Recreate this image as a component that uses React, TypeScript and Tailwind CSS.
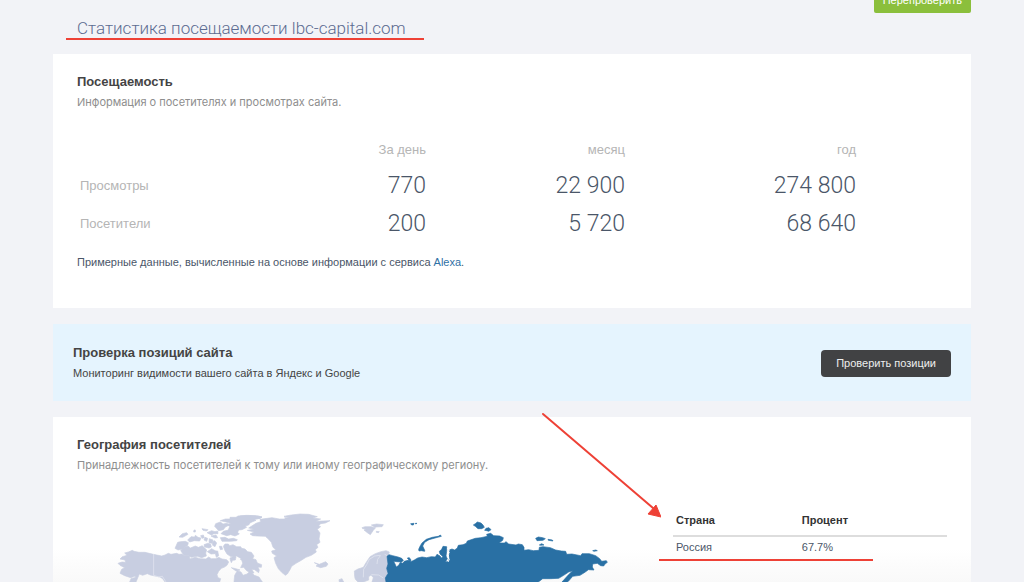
import type { ReactNode } from "react";

const traffic = [
  { label: "Просмотры", day: "770", month: "22 900", year: "274 800" },
  { label: "Посетители", day: "200", month: "5 720", year: "68 640" },
];

const countries = [{ name: "Россия", percent: "67.7%" }];

function SectionHeading({ title, children }: { title: string; children: ReactNode }) {
  return (
    <div>
      <h2 className="text-[13px] leading-5 font-bold text-[#444]">{title}</h2>
      <p className="font-['Inter','Liberation_Sans',sans-serif] text-[11px] leading-5 text-[#8e8e8e]">{children}</p>
    </div>
  );
}

function WorldMap() {
  return (
    <svg viewBox="0 0 1560 246" className="block w-[520px] shrink-0" role="img" aria-label="Карта мира">
      <g fill="#c8cee1" stroke="#c8cee1" strokeWidth="2" strokeLinejoin="round">
        {/* Alaska and northern Canada */}
        <path d="M54 190L66 186 77 187 75 180 60 177 67 170 81 166 74 159 85 156 97 151 102 154 117 157 135 157 160 163 185 168 195 165 205 160 213 163 230 160 237 163 246 162 252 166 268 168 270 177 286 172 300 176 318 177 326 171 334 176 348 176 356 172 366 177 380 179 386 186 381 196 372 202 364 205 356 214 351 224 354 233 362 236 359 246H195L188 236 180 231 165 228 151 225 142 221 128 226 118 222 113 234 108 246H89L93 236 108 232 104 229 92 233 74 227 60 220 65 208 74 203 60 196z" />
        <path d="M225 145L233 127 241 125 256 124 265 128 263 136 248 147 234 150z" />
        <path d="M242 152L250 143 264 138 271 144 286 138 295 142 307 137 315 145 320 150 317 159 319 168 305 173 292 169 274 172 265 167 251 165z" />
        <path d="M237 111l10-10 13-3 4 5-16 9z M263 120l10-10 11 1 2-5 8 6 9 2-4 9-16-1-14 4z M282 90l4 0 0 6-5 0z M306 86l18 3-4 4-11-2z M302 107l8-2 3 8-7 2z M315 112l8 3-3 9-8-4z M328 116l11 4-3 10-9-2z M321 98l14-6 10 3 8-2 1 8-12 0-8 4z M333 108l15-3 5 8-8 1z" />
        <path d="M312 134l11-4 9 2 2 9-7 3-13-3z M337 125l7-3 6 7-5 11-7-4z M322 155l13-9 12 7-2 8-12 1z M344 153l9 0 3 14-7 5z M358 139l7 0 3 9-7 1z" />
        <path d="M344 79L347 71 361 66 369 72 380 70 390 74 376 81 370 89 356 92z" />
        <path d="M361 62L376 57 390 57 390 52 408 52 414 48 440 46 465 47 486 51 480 55 462 58 468 61 451 68 446 75 436 78 440 82 426 89 416 90 413 97 418 102 405 108 392 104 380 107 363 101 370 94 385 90 389 79 380 74 392 70 378 66z" />
        <path d="M361 113L375 112 386 117 400 115 412 119 410 122 392 124 366 124z" />
        <path d="M370 139L375 132 385 132 389 137 399 134 410 140 422 140 425 145 435 147 443 155 454 157 462 168 458 176 468 179 472 189 485 194 484 202 474 201 478 210 476 218 464 209 455 208 462 219 454 220 440 212 431 202 422 203 428 190 424 176 410 168 405 172 391 169 381 162 375 152z" />
        <path d="M390 174L399 170 408 171 406 180 398 181 394 188 391 180z M394 203L407 206 420 210 408 213z M402 246L404 226 412 212 423 216 429 226 441 222 450 214 463 226 477 231 487 246z M421 178L427 175 433 172 438 178 432 182z" />

        {/* Greenland, Iceland and Scandinavia */}
        <g transform="translate(420 0)">
          <path d="M0 48L30 47 55 48 66 51 60 55 40 58 31 63 17 71 5 77 0 76z" />
          <path d="M22 91L42 88 26 84 48 70 62 65 60 58 82 55 96 53 118 57 136 57 134 53 148 53 132 49 154 45 180 42 206 43 232 50 218 54 242 57 228 64 270 62 256 69 242 71 236 77 242 80 232 88 240 99 237 117 240 127 230 134 234 142 226 149 229 156 214 166 198 172 182 182 168 190 155 199 150 209 142 222 136 226 125 217 115 206 107 190 102 173 110 168 97 160 95 153 108 149 99 142 94 127 85 117 76 109 52 108 38 107 30 102 42 96z" />
          <path d="M223 188L238 193 257 185 264 192 259 199 242 203 228 198 234 194z" />
          <path d="M366 83L375 80 393 80 407 83 400 91 391 104 382 98 372 90 378 87 368 86z M394 75L410 72 430 74 426 80 404 81z M409 94L418 95 415 98 409 97z" />
          <path d="M344 230L343 213 354 207 370 202 378 188 390 170 406 161 423 155 438 152 448 156 445 164 447 190 442 214 438 246H396L400 233 393 225 386 230 386 240 370 246H354L346 238z" />
          <path d="M297 239L306 236 311 246H298z" />
        </g>
      </g>

      <g fill="none" stroke="#e5e8f1" strokeWidth="2">
        <path d="M161 162V226L176 231 187 229 198 246" />
        <path d="M790 232L791 208 800 194 808 178 824 168 840 166M831 192L833 178 842 166M854 163L864 168" />
        <path d="M814 224L836 225 850 234" />
      </g>

      {/* Russia */}
      <g transform="translate(840 0)" fill="#2970a4" stroke="#2970a4" strokeWidth="2" strokeLinejoin="round">
        <path d="M21 169L27 164 38 167 54 171 65 175 70 181 65 186 50 185 41 184 45 192 49 201 56 196 61 187 68 190 73 184 84 181 89 183 82 174 88 173 93 180 91 186 103 180 113 174 126 171 140 173 154 170 166 171 171 163 180 168 184 174 189 170 180 162 178 154 185 148 189 139 200 140 200 154 198 168 202 176 196 186 205 184 209 174 206 165 210 158 207 150 216 147 224 150 232 144 235 136 249 134 259 130 262 123 286 115 303 113 322 109 320 103 332 100 341 107 359 108 370 113 368 121 357 129 373 129 378 125 386 132 408 135 415 132 427 134 432 142 432 151 446 149 460 152 477 151 478 142 489 140 511 143 527 150 544 153 557 154 560 163 576 162 602 167 606 161 628 161 647 167 659 176 665 184 679 182 682 187 675 192 671 198 662 197 652 190 638 192 637 201 642 210 625 209 616 216 600 226 578 229 565 244 562 246H546L564 226 578 212 566 216 551 226 536 235 512 236 488 236 475 246H18L16 234 24 220 20 205 24 192z" />
        <path d="M116 148L121 137 126 129 139 118 157 112 175 109 181 105 184 109 165 114 147 119 134 127 128 138 134 151 134 154 124 152 117 153z M280 75L286 71 292 66 303 69 309 75 313 82 305 86 294 86 286 79z M314 91L318 85 327 83 333 89 326 94 320 92z M467 115L475 111 488 113 496 116 489 121 471 122z M504 118L517 120 519 123 505 121z M478 135L485 131 492 135 481 136z M638 152L647 150 652 152 642 154z M92 71L102 70 100 75 95 75z M106 70L111 70 107 72z" />
      </g>
      <path d="M1041 145L1048 149 1044 157 1046 164 1044 173 1048 178 1044 186" fill="none" stroke="white" strokeWidth="3" />
    </svg>
  );
}

export default function App() {
  return (
    <div className="flex min-h-screen flex-col bg-[#f2f3f7] px-[53px] font-['Liberation_Sans',Arial,sans-serif] text-[#4a5668]">
      <header className="flex h-[54px] items-start justify-between pl-6">
        <h1 className="relative pt-4 font-['Roboto','Liberation_Sans',sans-serif] text-[17px] leading-6 font-light text-[#5c6b91]">
          Статистика посещаемости lbc-capital.com
          <span className="absolute -right-[18px] -left-[11px] top-[38px] h-[2px] bg-[#ee4136]" />
        </h1>
        <button className="-mt-3 h-[25px] rounded-[2px] bg-[#8bbf3c] px-[9px] text-[11px] text-white">
          Перепроверить
        </button>
      </header>

      <main className="flex flex-1 flex-col gap-4">
        <section className="bg-white px-6 pt-[18px] pb-9">
          <SectionHeading title="Посещаемость">Информация о посетителях и просмотрах сайта.</SectionHeading>
          <div className="mt-5 pr-[91px]">
            <table className="w-full table-fixed">
              <thead>
                <tr className="h-[35px] text-right text-[13px] text-[#b5b5b5]">
                  <td />
                  <th scope="col" className="w-[162px] font-normal">За день</th>
                  <th scope="col" className="w-[199px] font-normal">месяц</th>
                  <th scope="col" className="w-[231px] font-normal">год</th>
                </tr>
              </thead>
              <tbody>
                {traffic.map((row) => (
                  <tr
                    key={row.label}
                    className="h-[38px] text-right font-['Roboto','Liberation_Sans',sans-serif] text-[23px] font-light"
                  >
                    <th scope="row" className="pl-[3px] text-left font-['Liberation_Sans',Arial,sans-serif] text-[13px] font-normal text-[#b5b5b5]">
                      {row.label}
                    </th>
                    <td>{row.day}</td>
                    <td>{row.month}</td>
                    <td>{row.year}</td>
                  </tr>
                ))}
              </tbody>
            </table>
          </div>
          <p className="mt-[9px] text-[11px] leading-5">
            Примерные данные, вычисленные на основе информации с сервиса <a href="#alexa" className="text-[#2f71a5]">Alexa</a>.
          </p>
        </section>

        <section className="flex items-center justify-between bg-[#e5f4fe] pt-[19px] pr-5 pb-[18px] pl-5">
          <div>
            <h2 className="text-[13px] leading-5 font-bold text-[#444]">Проверка позиций сайта</h2>
            <p className="text-[11px] leading-5 text-[#444]">Мониторинг видимости вашего сайта в Яндекс и Google</p>
          </div>
          <button className="h-[27px] rounded bg-[#414244] px-[15px] text-[11px] text-[#eee]">Проверить позиции</button>
        </section>

        <section className="relative flex-1 bg-linear-to-b from-white from-80% to-[#f9f9f9] px-6 pt-[18px]">
          <SectionHeading title="География посетителей">
            Принадлежность посетителей к тому или иному географическому региону.
          </SectionHeading>
          <div className="mt-[25px] flex items-start justify-between">
            <div className="pl-[23px]">
              <WorldMap />
            </div>
            <div className="relative mt-[6px] w-[274px]">
              <table className="w-full text-left text-[11px]">
                <thead>
                  <tr className="h-[30px] border-b-2 border-[#ddd] text-[#333]">
                    <th scope="col" className="w-[47%] pl-[3px]">Страна</th>
                    <th scope="col">Процент</th>
                  </tr>
                </thead>
                <tbody>
                  {countries.map((country) => (
                    <tr key={country.name} className="h-[22px]">
                      <td className="pl-[3px]">{country.name}</td>
                      <td>{country.percent}</td>
                    </tr>
                  ))}
                </tbody>
              </table>
              <span className="absolute top-[53px] -left-[14px] h-[2px] w-[214px] bg-[#ee4136]" />
              <svg viewBox="0 0 120 106" className="absolute -top-[94px] -left-[132px] w-[120px]" aria-hidden="true">
                <path d="M2 2L112 96" stroke="#ee4136" strokeWidth="2" strokeLinecap="round" />
                <path d="M120 105l-13-3 8-9z" fill="#ee4136" stroke="#ee4136" />
              </svg>
            </div>
          </div>
        </section>
      </main>
    </div>
  );
}
